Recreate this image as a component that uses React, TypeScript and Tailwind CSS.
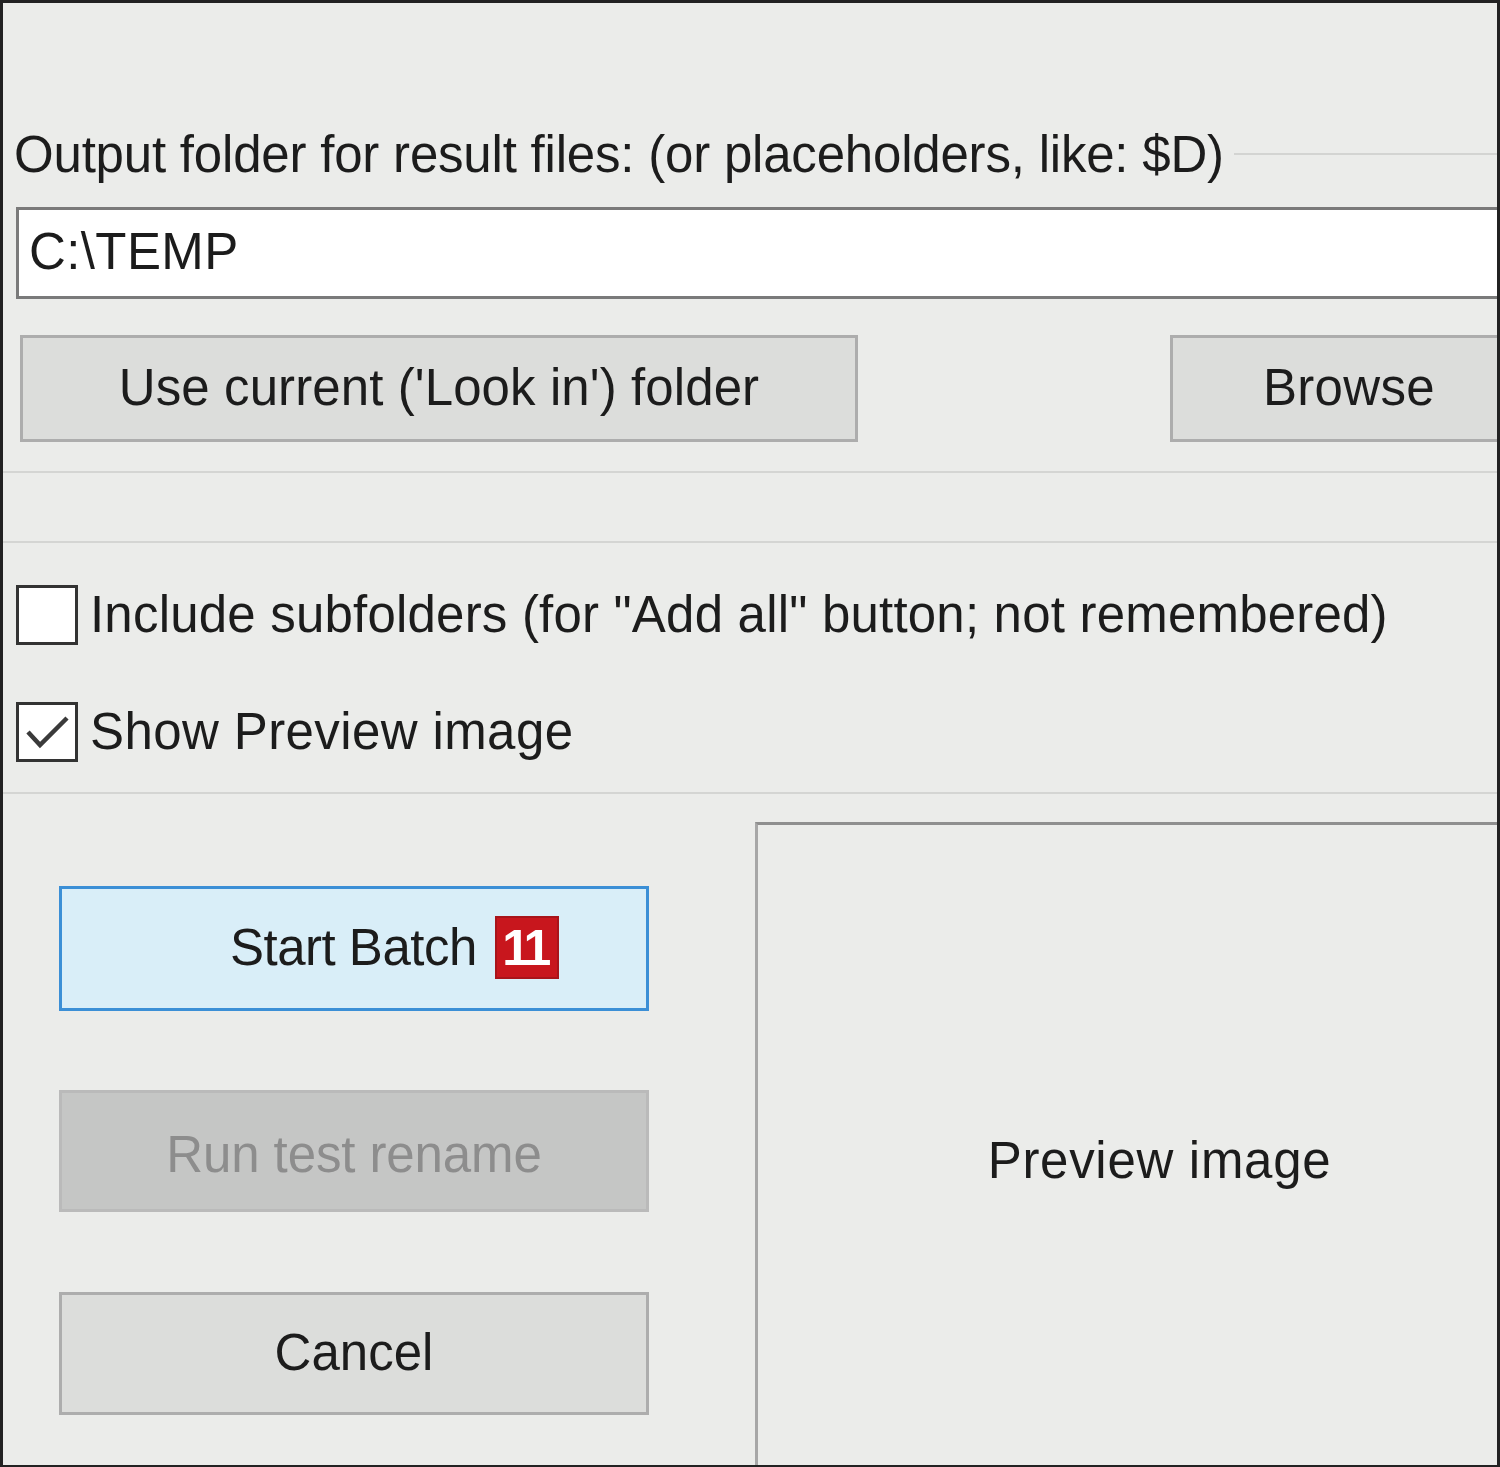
import React from "react";

const font = { fontFamily: '"Liberation Sans", Arial, sans-serif' };

function Checkbox({ checked }: { checked?: boolean }) {
  return (
    <div className="w-[62px] h-[60px] border-[3px] border-[#333333] bg-white flex items-center justify-center shrink-0">
      {checked && (
        <svg width="56" height="54" viewBox="0 0 56 54">
          <polyline points="9,27 21,40 48,13" fill="none" stroke="#3a3a3a" strokeWidth="4.5" />
        </svg>
      )}
    </div>
  );
}

export default function App() {
  return (
    <div
      className="w-[1500px] h-[1467px] bg-[#ebecea] border-l-[3px] border-r-[3px] border-t-[3px] border-b-[2px] border-[#222222] flex flex-col overflow-hidden text-[#1c1c1c] text-[51px] leading-none"
      style={font}
    >
      {/* Label row */}
      <div className="mt-[121px] h-[60px] flex items-center pl-[11px]">
        <span className="whitespace-nowrap tracking-[-0.2px]">
          Output folder for result files: (or placeholders, like: $D)
        </span>
        <div className="flex-1 h-[2px] bg-[#d3d4d2] ml-[10px]" />
      </div>

      {/* Textbox */}
      <div className="mt-[23px] ml-[13px] h-[92px] bg-white border-[3px] border-r-0 border-[#7a7a7a] flex items-center pl-[10px] pb-[4px]">
        <span className="tracking-[0.4px]">C:\TEMP</span>
      </div>

      {/* Button row */}
      <div className="mt-[36px] h-[107px] flex justify-between pl-[17px]">
        <div className="w-[838px] h-full bg-[#dcdddb] border-[3px] border-[#adadad] flex items-center justify-center pb-[2px]">
          <span className="whitespace-nowrap tracking-[0.1px]">Use current ('Look in') folder</span>
        </div>
        <div className="w-[327px] h-full bg-[#dcdddb] border-[3px] border-r-0 border-[#adadad] flex items-center pl-[90px] pb-[2px]">
          <span className="tracking-[0.3px]">Browse</span>
        </div>
      </div>

      {/* Separators */}
      <div className="mt-[29px] h-[2px] bg-[#d4d5d3]" />
      <div className="mt-[68px] h-[2px] bg-[#d4d5d3]" />

      {/* Checkboxes */}
      <div className="mt-[42px] flex items-center pl-[13px] gap-[12px]">
        <Checkbox />
        <span className="whitespace-nowrap tracking-[0.2px] pb-[2px]">
          Include subfolders (for "Add all" button; not remembered)
        </span>
      </div>
      <div className="mt-[57px] flex items-center pl-[13px] gap-[12px]">
        <Checkbox checked />
        <span className="whitespace-nowrap tracking-[0.4px] pb-[2px]">Show Preview image</span>
      </div>

      <div className="mt-[30px] h-[2px] bg-[#d4d5d3]" />

      {/* Bottom area */}
      <div className="flex-1 flex">
        <div className="w-[752px] shrink-0 flex flex-col pl-[56px] pt-[92px]">
          <div className="w-[590px] h-[125px] bg-[#d9eef8] border-[3px] border-[#3b8fd6] flex items-center pl-[168px] pb-[2px]">
            <span className="whitespace-nowrap tracking-[-0.5px]">Start Batch</span>
            <span className="ml-[18px] w-[64px] h-[63px] bg-[#c8161d] border-[2px] border-[#a8141a] text-white font-bold text-[50px] flex items-center justify-center tracking-[-4px] pr-[4px]">
              11
            </span>
          </div>
          <div className="mt-[79px] w-[590px] h-[122px] bg-[#c5c6c5] border-[3px] border-[#bababa] flex items-center justify-center text-[#8d8d8d] pt-[6px]">
            <span className="whitespace-nowrap tracking-[-0.1px]">Run test rename</span>
          </div>
          <div className="mt-[80px] w-[590px] h-[123px] bg-[#dcdddb] border-[3px] border-[#adadad] flex items-center justify-center pb-[2px]">
            <span>Cancel</span>
          </div>
        </div>
        <div className="flex-1 mt-[28px] border-l-[3px] border-t-[3px] border-[#8f8f8f] border-l-[#a7a7a7] flex items-center justify-center pl-[64px] pt-[30px]">
          <span className="whitespace-nowrap tracking-[0.7px]">Preview image</span>
        </div>
      </div>
    </div>
  );
}
